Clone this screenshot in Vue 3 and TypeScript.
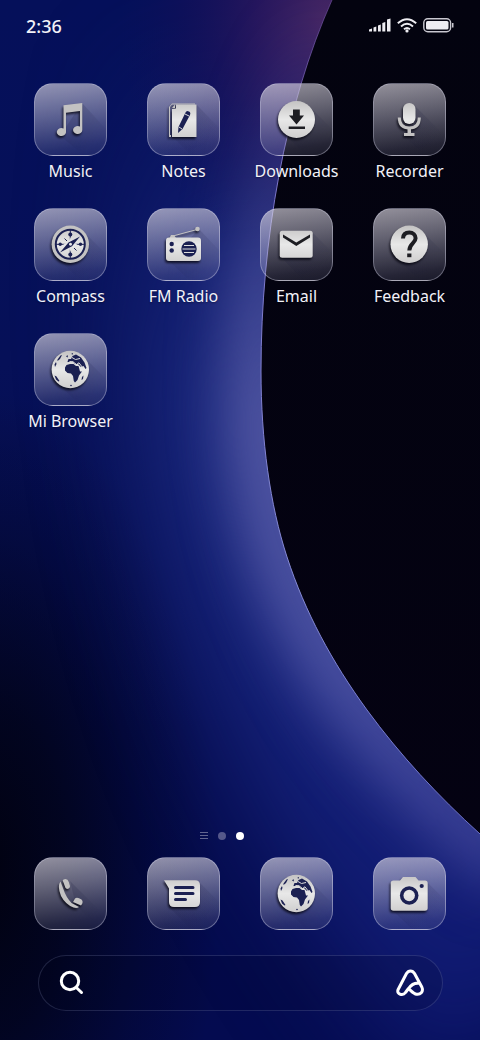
<script setup lang="ts">
interface AppEntry {
  name: string
  icon: string
  tone?: 'dark'
}

const apps: AppEntry[] = [
  { name: 'Music', icon: 'music' },
  { name: 'Notes', icon: 'notes' },
  { name: 'Downloads', icon: 'downloads', tone: 'dark' },
  { name: 'Recorder', icon: 'recorder', tone: 'dark' },
  { name: 'Compass', icon: 'compass' },
  { name: 'FM Radio', icon: 'radio' },
  { name: 'Email', icon: 'email', tone: 'dark' },
  { name: 'Feedback', icon: 'feedback', tone: 'dark' },
  { name: 'Mi Browser', icon: 'globe' },
]

const dock: AppEntry[] = [
  { name: 'Phone', icon: 'phone' },
  { name: 'Messages', icon: 'messages' },
  { name: 'Browser', icon: 'globe' },
  { name: 'Camera', icon: 'camera' },
]
</script>

<template>
  <main class="home">
    <svg class="wallpaper" viewBox="0 0 480 1040" preserveAspectRatio="none" aria-hidden="true">
      <defs>
        <linearGradient id="base" x1="0" y1="0" x2="0" y2="1">
          <stop offset="0" stop-color="#05105a" />
          <stop offset=".35" stop-color="#061058" />
          <stop offset=".7" stop-color="#040b4c" />
          <stop offset="1" stop-color="#040b50" />
        </linearGradient>
        <radialGradient id="leftShade" cx="0" cy="0" r="1" gradientUnits="userSpaceOnUse" gradientTransform="translate(-20 870) scale(240 480)">
          <stop offset="0" stop-color="#01010f" />
          <stop offset=".35" stop-color="#01020f" stop-opacity=".72" />
          <stop offset=".7" stop-color="#01020f" stop-opacity=".28" />
          <stop offset="1" stop-color="#01020f" stop-opacity="0" />
        </radialGradient>
        <radialGradient id="purple" cx="0" cy="0" r="1" gradientUnits="userSpaceOnUse" gradientTransform="translate(330 20) scale(210 260)">
          <stop offset="0" stop-color="#4a2763" stop-opacity=".95" />
          <stop offset=".35" stop-color="#2e185e" stop-opacity=".8" />
          <stop offset=".7" stop-color="#1a1058" stop-opacity=".4" />
          <stop offset="1" stop-color="#101058" stop-opacity="0" />
        </radialGradient>
        <linearGradient id="rim" x1="0" y1="0" x2="0" y2="1">
          <stop offset="0" stop-color="#7654a8" stop-opacity=".6" />
          <stop offset=".2" stop-color="#7b74c8" />
          <stop offset=".7" stop-color="#858ad4" />
          <stop offset="1" stop-color="#6a70c8" />
        </linearGradient>
        <linearGradient id="haze" x1="0" y1="0" x2="0" y2="1040" gradientUnits="userSpaceOnUse">
          <stop offset="0" stop-color="#6a6cb4" stop-opacity="0" />
          <stop offset=".15" stop-color="#6a6cb4" stop-opacity=".25" />
          <stop offset=".4" stop-color="#6668b0" stop-opacity=".75" />
          <stop offset=".65" stop-color="#6064b2" stop-opacity=".72" />
          <stop offset=".85" stop-color="#4a4da4" stop-opacity=".6" />
        </linearGradient>
        <linearGradient id="glow" x1="0" y1="0" x2="0" y2="1040" gradientUnits="userSpaceOnUse">
          <stop offset="0" stop-color="#1c2880" stop-opacity="0" />
          <stop offset=".2" stop-color="#1c2880" stop-opacity=".45" />
          <stop offset=".4" stop-color="#1c2a80" />
          <stop offset=".7" stop-color="#152178" />
          <stop offset="1" stop-color="#101a74" stop-opacity=".9" />
        </linearGradient>
        <linearGradient id="night" x1="0" y1="0" x2="0" y2="1">
          <stop offset="0" stop-color="#03030f" />
          <stop offset="1" stop-color="#040212" />
        </linearGradient>
        <filter id="wide" x="-400" y="-300" width="1300" height="1700" filterUnits="userSpaceOnUse" color-interpolation-filters="sRGB"><feGaussianBlur stdDeviation="52" /></filter>
        <filter id="mid" x="-200" y="-200" width="900" height="1400" filterUnits="userSpaceOnUse" color-interpolation-filters="sRGB"><feGaussianBlur stdDeviation="27" /></filter>
      </defs>
      <rect width="480" height="1040" fill="url(#base)" />
      <rect width="480" height="1040" fill="url(#leftShade)" />
      <path d="M265 60C235 480 320 750 540 1010" fill="none" stroke="url(#glow)" stroke-width="260" filter="url(#wide)" />
      <rect width="480" height="1040" fill="url(#purple)" />
      <path d="M355 -50L332 0C285 105 261 240 261 371C261 440 270 505 287 557C305 612 332 662 367 710C400 755 438 796 520 872" fill="none" stroke="url(#haze)" stroke-width="72" filter="url(#mid)" />
      <path d="M332 0C285 105 261 240 261 371C261 440 270 505 287 557C305 612 332 662 367 710C400 755 438 796 480 834V0Z" fill="url(#night)" />
      <path d="M332 0C285 105 261 240 261 371C261 440 270 505 287 557C305 612 332 662 367 710C400 755 438 796 480 834" fill="none" stroke="url(#rim)" stroke-width="1" />
    </svg>

    <svg class="sprite" aria-hidden="true">
      <defs>
        <linearGradient id="metal" x1="0" y1="18" x2="0" y2="55" gradientUnits="userSpaceOnUse">
          <stop offset="0" stop-color="#c4c3c3" />
          <stop offset=".5" stop-color="#e8e8e8" />
          <stop offset="1" stop-color="#cfcece" />
        </linearGradient>
        <linearGradient id="cast" x1="36" y1="30" x2="62" y2="60" gradientUnits="userSpaceOnUse">
          <stop offset="0" stop-color="#0a0d30" stop-opacity=".16" />
          <stop offset="1" stop-color="#0a0d30" stop-opacity="0" />
        </linearGradient>
      </defs>
      <symbol id="music" viewBox="0 0 73 73">
        <path class="cast" d="M48 20L72 46V72H50L26 53Z" />
        <g class="raised">
          <path class="muted" fill-rule="evenodd" d="M29.500 22.300L48.300 20V47A4.600 4 0 1 1 46 43.500V28L32 29.700V49.500A4.600 4 0 1 1 29.500 45.500Z" />
        </g>
      </symbol>
      <symbol id="notes" viewBox="0 0 73 73">
        <path class="cast" d="M49 21L72 45V72H44L25 53Z" />
        <g class="raised">
          <path class="muted" d="M25 20.500H48V21.500H25L23 24V52H24V54H22V24Z" />
          <path class="metal" d="M29 21.500H49.500V54H25V26L29 25.500Z" />
          <path class="muted" d="M25 25L28 21.500V25Z" />
          <path class="cut" d="M38.500 29.500Q39.500 27 42 28.500Q44 29.500 43 32L35.500 46L31 50L31.500 44Z" />
          <path d="M38 31L42 33M32 44L35 46" class="line" />
        </g>
      </symbol>
      <symbol id="downloads" viewBox="0 0 73 73">
        <path class="cast" d="M49 23L72 46V72H46L23 50Z" />
        <g class="raised">
          <circle class="metal" cx="36.500" cy="36.500" r="18.500" />
          <path class="cut" d="M33 26.500H39.800V32.500H44L36.500 41.500L29 32.500H33ZM28.700 43.500H45V46H28.700Z" />
        </g>
      </symbol>
      <symbol id="recorder" viewBox="0 0 73 73">
        <path class="cast" d="M42 23L72 53V72H51L31 53Z" />
        <g class="raised">
          <rect class="metal" x="30" y="20" width="12.500" height="21" rx="6.200" />
          <path class="stroke" d="M26.300 34.500C26.300 41 29.500 45 36.300 45S46.300 41 46.300 34.500" />
          <path class="muted" d="M34.500 45H38V50H41.500V53H31V50H34.500Z" />
        </g>
      </symbol>
      <symbol id="compass" viewBox="0 0 73 73">
        <path class="cast" d="M49 23L72 46V72H46L23 50Z" />
        <g class="raised">
          <circle class="muted" cx="36.300" cy="36.300" r="18.700" />
          <circle class="metal ring" cx="36.300" cy="36.300" r="14.500" />
          <path class="ring thinring" d="M36.300 22V51M22 36.300H51" />
          <circle class="cut" cx="36.300" cy="26.500" r="2" />
          <circle class="cut" cx="36.300" cy="46.500" r="2" />
          <circle class="cut" cx="26.200" cy="36.300" r="1.700" />
          <circle class="cut" cx="46.500" cy="36.300" r="1.700" />
          <path class="metal" d="M36.300 29L37.700 32.700L42 31L40 35L43.500 36.300L40 38L41 42L37.700 40L36.300 44L35 40L31 41.500L32.500 38L29 36.300L32.500 35L31.500 31L35 32.700Z" />
          <path class="cut" fill-rule="evenodd" d="M46 28.500L38 38.200L26 44.500L34.500 34.500ZM36.500 34.800A1.500 1.500 0 1 0 36.510 34.800Z" />
          <path class="ring thinring" d="M30.500 30.500L33 33M40 40L42.500 42.500" />
        </g>
      </symbol>
      <symbol id="radio" viewBox="0 0 73 73">
        <path class="cast" d="M52 21L72 42V72H42L22 53Z" />
        <g class="raised">
          <path class="stroke slim" d="M24 28.500L50 21.500" />
          <circle class="muted" cx="50.500" cy="21" r="2.300" />
          <path class="muted" d="M22.500 30L24 27H27L29 30Z" />
          <rect class="metal" x="19" y="29.500" width="35" height="23.500" rx="3" />
          <circle class="cut" cx="24.700" cy="36" r="2.200" />
          <circle class="cut" cx="24.700" cy="42.500" r="2.200" />
          <circle class="cut" cx="42" cy="41" r="7.700" />
          <path class="line" d="M37 37.500H47M35.500 41H48.500M37 44.500H47" />
        </g>
      </symbol>
      <symbol id="email" viewBox="0 0 73 73">
        <path class="cast" d="M52 24L72 44V72H43L21 49Z" />
        <g class="raised">
          <rect class="metal" x="19.700" y="22.700" width="33" height="27" rx="2.500" />
          <path class="cut" d="M23 26.500L36.300 34.500L50 26.500V29.500L36.300 38L23 29.500Z" />
        </g>
      </symbol>
      <symbol id="feedback" viewBox="0 0 73 73">
        <path class="cast" d="M49 23L72 46V72H46L23 50Z" />
        <g class="raised">
          <circle class="metal" cx="36.200" cy="36.200" r="18.700" />
          <path class="ring question" d="M30 30.500C30.200 26.300 32.500 24.500 36.300 24.500C40 24.500 42.600 27 42.600 30.300C42.600 35 36.300 35.500 36.300 42.500" />
          <rect class="cut" x="34.200" y="45.500" width="4.200" height="3.700" />
        </g>
      </symbol>
      <symbol id="globe" viewBox="0 0 73 73">
        <path class="cast" d="M49 23L72 46V72H46L23 50Z" />
        <g class="raised">
          <circle class="metal" cx="36.300" cy="36.500" r="18.700" />
          <path class="cut" d="M32.500 32L36 31L39.500 31L42 33L44.500 33L46 38.500L48 38.500L45 42.500L43.500 47L41 49.500L39.800 48L39 43L37 40.500L33.500 40L31 37.500L31 34.500Z" />
          <path class="cut" d="M33.500 28.500L34.500 26L37 26L38.500 23L42 21.500L47 24.500L50.500 29.500L52.500 35L51.500 36L49.500 33L47 34L44 31L41 31L39 28.500L36 28L34 30Z" />
          <path class="line" d="M33 29.800L39 28.800L42.500 31.500L45 29.800L48.500 34.500M38 24.500L41.500 26.500L46 25.500" />
          <path class="cut" d="M32 23.500L33.500 22L34 24.500ZM37 21L39 20L39 21.500ZM23.500 26.500L26.500 22.500L28 22L26 26L23.500 28ZM20.500 31.500L22 29L22.500 31L21 34ZM20.500 42.500L22.500 43.500L25.500 48L24.500 48.500L22 46.500ZM48 44L49.500 42.500L49 46L47.500 47Z" />
          <circle class="cut" cx="37" cy="52.500" r=".8" />
        </g>
      </symbol>
      <symbol id="phone" viewBox="0 0 73 73">
        <path class="cast" d="M36 24L72 60V72H66L42 49Z" />
        <g class="raised">
          <path class="muted" d="M29.500 22.500Q33.500 21 34.800 25L36 29Q36 31.500 33 32L31.500 31L28.700 23.500ZM39 45L41 41.500Q43 39.500 47.500 42.500Q50 45 47 48.500Z" />
          <path class="muted" d="M26.500 24.500L29.500 32.500Q32 40 37.500 46L45 50Q43 51.700 39.500 50.500Q31.500 47.500 27 39Q23 29 26.500 24.500Z" />
        </g>
      </symbol>
      <symbol id="messages" viewBox="0 0 73 73">
        <path class="cast" d="M52 25L72 45V72H44L22 50Z" />
        <g class="raised">
          <path class="metal" d="M17 23.300H48Q53 23.300 53 28.300V45Q53 50 48 50H27Q22 50 22 45V31.500Z" />
          <path class="ring bars" d="M28.500 30.500H46M28.500 36.500H46M28.500 42.500H38.500" />
        </g>
      </symbol>
      <symbol id="camera" viewBox="0 0 73 73">
        <path class="cast" d="M54 25L72 43V72H39L19 53Z" />
        <g class="raised">
          <path class="metal" d="M20.500 23.500H27L30 20H42.500L45.500 23.500H52Q54.700 23.500 54.700 26V51Q54.700 53.700 52 53.700H20.500Q17.700 53.700 17.700 51V26Q17.700 23.500 20.500 23.500Z" />
          <circle class="cut" cx="36.200" cy="38.500" r="9.300" />
          <circle class="metal" cx="36.200" cy="38.500" r="5.700" />
          <circle class="cut" cx="48.700" cy="29" r="2.100" />
        </g>
      </symbol>
    </svg>

    <header class="status">
      <time class="clock">2:36</time>
      <div class="signals">
        <svg width="22" height="14" viewBox="0 0 22 14" role="img" aria-label="Mobile signal">
          <path fill="#eeedf2" d="M0 11.500L3 10.500V13.500H0ZM4.500 9.500L7.300 8.500V13.500H4.500ZM9 7.500L11.800 6.500V13.500H9ZM13.300 5L16.300 4V13.500H13.300ZM18 1.500L21.500 .5V13.500H18Z" />
        </svg>
        <svg width="20" height="15" viewBox="0 0 20 15" role="img" aria-label="Wi-Fi">
          <path d="M.8 5.300Q10-3 19.200 5.300M4 8.500Q10 3 16 8.500M7 11.300Q10 8.800 13 11.300" fill="none" stroke="#eeedf2" stroke-width="1.900" />
          <circle cx="10" cy="12.900" r="1.600" fill="#eeedf2" />
        </svg>
        <svg width="31" height="15" viewBox="0 0 31 15" role="img" aria-label="Battery full">
          <rect x=".8" y=".8" width="26.800" height="13" rx="4" fill="none" stroke="#c9c8d0" stroke-width="1.400" />
          <rect x="3" y="3" width="22.500" height="8.500" rx="1.500" fill="#eeedf2" />
          <path d="M29 5H30.500V9.500H29Z" fill="#c9c8d0" />
        </svg>
      </div>
    </header>

    <nav class="grid" aria-label="Apps">
      <button v-for="app in apps" :key="app.name" type="button" class="app" :class="app.tone">
        <span class="tile"><svg class="glyph" viewBox="0 0 73 73" aria-hidden="true"><use :href="`#${app.icon}`" /></svg></span>
        <span class="label">{{ app.name }}</span>
      </button>
    </nav>

    <div class="pages">
      <svg width="8" height="8" viewBox="0 0 8 8" aria-hidden="true"><path d="M0 .5H8M0 3.500H8M0 6.500H8" stroke="#62658f" stroke-width="1" /></svg>
      <button type="button" class="page" aria-label="Page 1"></button>
      <button type="button" class="page current" aria-label="Page 2" aria-current="page"></button>
    </div>

    <nav class="grid dock" aria-label="Dock">
      <button v-for="app in dock" :key="app.name" type="button" class="app" :aria-label="app.name">
        <span class="tile"><svg class="glyph" viewBox="0 0 73 73" aria-hidden="true"><use :href="`#${app.icon}`" /></svg></span>
      </button>
    </nav>

    <form class="search" role="search" @submit.prevent>
      <button type="submit" class="tool" aria-label="Search">
        <svg width="28" height="28" viewBox="0 0 28 28" aria-hidden="true">
          <circle cx="13" cy="12" r="8.700" /><path d="M19.300 18.500L24.500 23.500" />
        </svg>
      </button>
      <input class="query" type="search" aria-label="Search query" />
      <button type="button" class="tool" aria-label="Assistant">
        <svg width="28" height="28" viewBox="0 0 28 28" aria-hidden="true">
          <path d="M12.500 19.500L9.500 23.500C7 27 .5 25.500 2 20.800L10.500 4.500C12.500 1 16.500 1 18.500 4.500L25.800 18C28 23 24 25.800 20.500 25.200C17.500 24.800 15.500 22 12.500 19.500C15 16 19 13.500 23.500 14.300" />
        </svg>
      </button>
    </form>
  </main>
</template>

<style>
html,
body {
  background: #03051c;
}
</style>

<style scoped>
.home {
  position: relative;
  isolation: isolate;
  display: flex;
  flex-direction: column;
  min-height: 100vh;
  box-sizing: border-box;
  padding-bottom: 29px;
  overflow: hidden;
  color: #f1f1f8;
  font-family: "Noto Sans", "Open Sans", sans-serif;
}
.wallpaper {
  position: absolute;
  inset: 0;
  z-index: -1;
  width: 100%;
  height: 100%;
}
.sprite {
  position: absolute;
  width: 0;
  height: 0;
}
.status {
  display: flex;
  align-items: center;
  justify-content: space-between;
  height: 52px;
  margin-bottom: 31px;
  padding: 0 26px;
}
.clock {
  font-size: 18px;
  font-weight: 500;
  line-height: 24px;
}
.signals {
  display: flex;
  align-items: center;
  gap: 6px;
  padding-bottom: 2px;
}
.grid {
  display: grid;
  grid-template-columns: repeat(4, 1fr);
  row-gap: 26px;
  padding: 0 14px;
}
button {
  padding: 0;
  border: 0;
  background: none;
  color: inherit;
  font: inherit;
}
.app {
  --cut: #1b2052;
  display: flex;
  flex-direction: column;
  align-items: center;
  gap: 4px;
}
.app.dark {
  --cut: #1d1d22;
}
.tile {
  box-sizing: border-box;
  width: 73px;
  height: 73px;
  border: 1px solid rgba(220, 220, 238, .38);
  border-radius: 19px;
  background: linear-gradient(172deg, rgba(222, 218, 228, .66) 0%, rgba(200, 198, 216, .46) 42%, rgba(160, 160, 192, .22) 85%, rgba(150, 152, 180, .16) 100%);
  overflow: hidden;
}
.glyph {
  display: block;
  width: 73px;
  height: 73px;
  margin: -1px;
}
.label {
  font-size: 16px;
  line-height: 22px;
  white-space: nowrap;
  text-shadow: 0 1px 2px rgba(0, 0, 20, .4);
}
.raised {
  filter: drop-shadow(-1px 2px 1px rgba(0, 0, 10, .75));
}
.cast {
  fill: url(#cast);
}
.metal {
  fill: url(#metal);
}
.muted {
  fill: #c3c2c2;
}
.cut {
  fill: var(--cut);
}
.stroke {
  fill: none;
  stroke: #c3c2c2;
  stroke-width: 3px;
}
.slim {
  stroke-width: 1px;
}
.line {
  fill: none;
  stroke: #dddddd;
  stroke-width: 1px;
}
.ring {
  stroke: var(--cut);
  stroke-width: 2px;
}
.thinring {
  stroke-width: 1px;
}
.question {
  fill: none;
  stroke-width: 4px;
}
.bars {
  fill: none;
  stroke-width: 3px;
  stroke-linecap: round;
}
.pages {
  display: flex;
  align-items: center;
  justify-content: center;
  gap: 10px;
  margin: auto 36px 17px 0;
}
.page {
  width: 8px;
  height: 8px;
  border-radius: 50%;
  background: #55588a;
}
.page.current {
  background: #fff;
}
.dock {
  margin-bottom: 25px;
}
.search {
  display: flex;
  align-items: center;
  box-sizing: border-box;
  height: 56px;
  margin: 0 37px 0 38px;
  padding: 0 18px;
  border: 1px solid rgba(150, 160, 210, .2);
  border-radius: 28px;
  background: rgba(0, 0, 20, .12);
}
.query {
  flex: 1;
  min-width: 0;
  border: 0;
  outline: 0;
  background: transparent;
  color: inherit;
  font: inherit;
}
.tool {
  display: flex;
}
.tool svg {
  fill: none;
  stroke: #fff;
  stroke-width: 3px;
  stroke-linecap: round;
  stroke-linejoin: round;
}
</style>
